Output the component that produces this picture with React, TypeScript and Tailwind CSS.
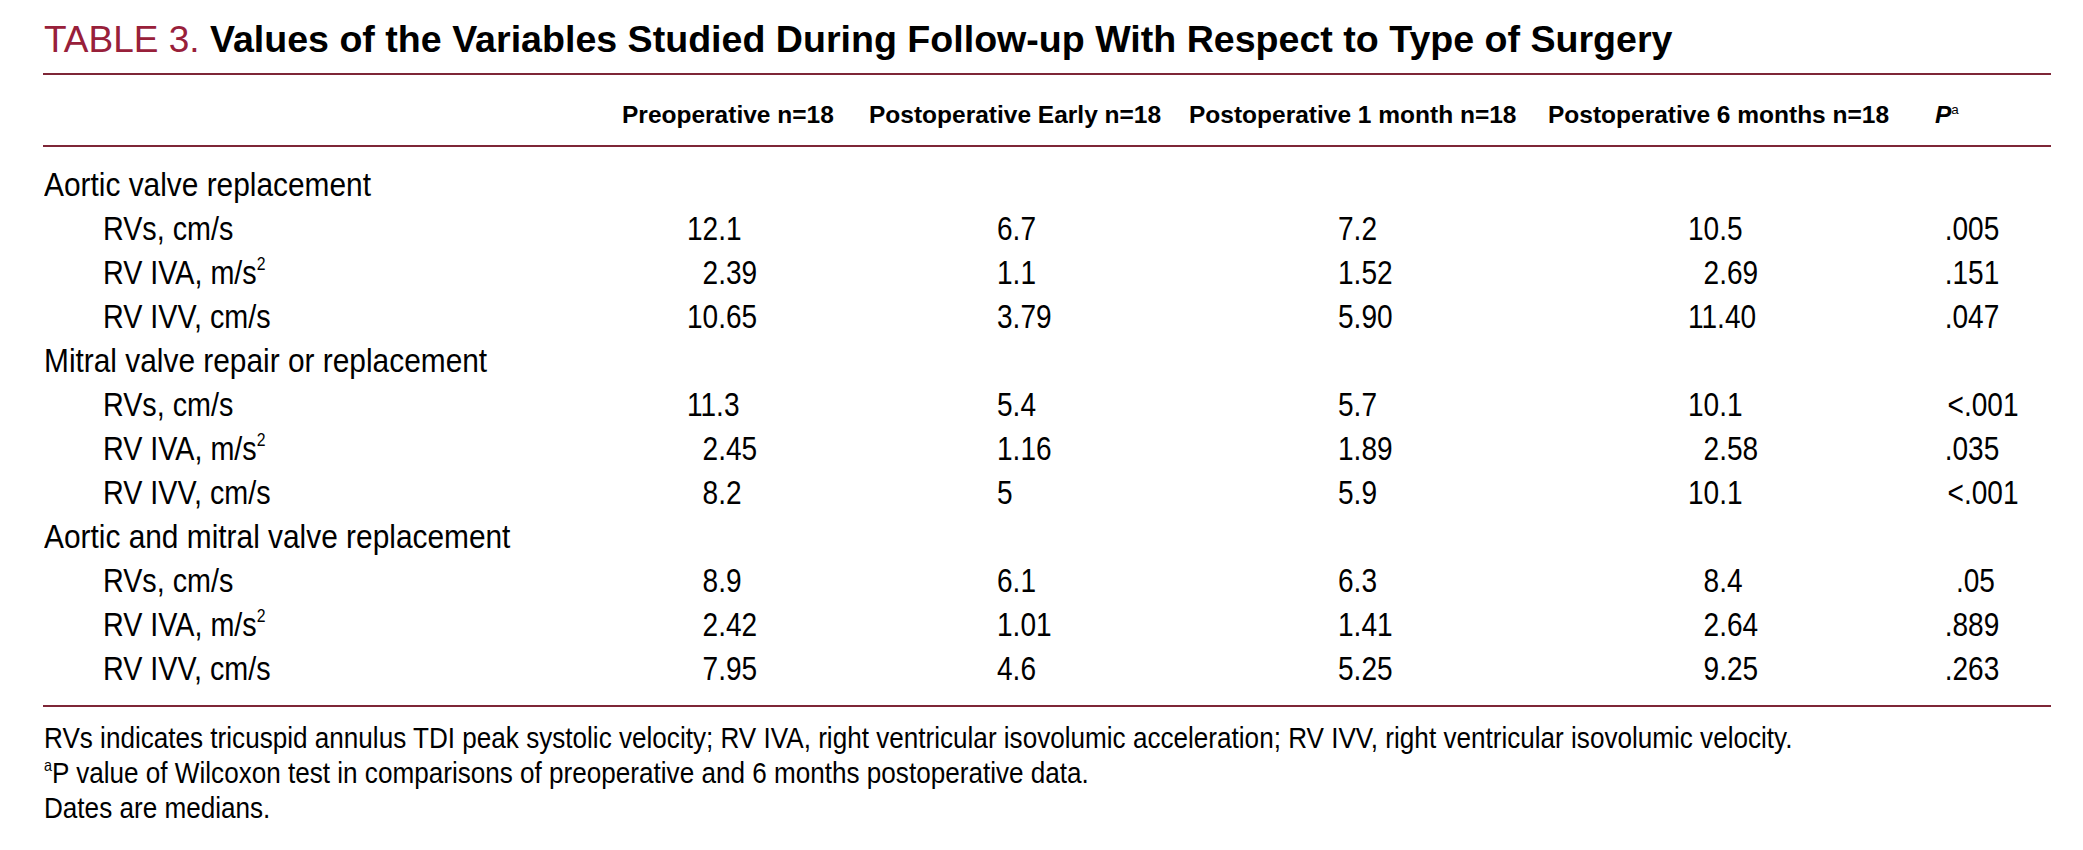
import type { ReactNode } from 'react';

/**
 * Table 3 — follow-up values by type of surgery
 */

type Row = {
  label: ReactNode;
  values: string[];
};

type Group = {
  label: string;
  rows: Row[];
};

const ivaLabel = (
  <>
    RV IVA, m/s<sup className="text-[55%] -top-[0.75em]">2</sup>
  </>
);

const groups: Group[] = [
  {
    label: 'Aortic valve replacement',
    rows: [
      { label: 'RVs, cm/s', values: ['12.1', '6.7', '7.2', '10.5', '.005'] },
      { label: ivaLabel, values: ['2.39', '1.1', '1.52', '2.69', '.151'] },
      { label: 'RV IVV, cm/s', values: ['10.65', '3.79', '5.90', '11.40', '.047'] },
    ],
  },
  {
    label: 'Mitral valve repair or replacement',
    rows: [
      { label: 'RVs, cm/s', values: ['11.3', '5.4', '5.7', '10.1', '<.001'] },
      { label: ivaLabel, values: ['2.45', '1.16', '1.89', '2.58', '.035'] },
      { label: 'RV IVV, cm/s', values: ['8.2', '5', '5.9', '10.1', '<.001'] },
    ],
  },
  {
    label: 'Aortic and mitral valve replacement',
    rows: [
      { label: 'RVs, cm/s', values: ['8.9', '6.1', '6.3', '8.4', '.05'] },
      { label: ivaLabel, values: ['2.42', '1.01', '1.41', '2.64', '.889'] },
      { label: 'RV IVV, cm/s', values: ['7.95', '4.6', '5.25', '9.25', '.263'] },
    ],
  },
];

const headers = [
  'Preoperative n=18',
  'Postoperative Early n=18',
  'Postoperative 1 month n=18',
  'Postoperative 6 months n=18',
];

// left offset of the numbers inside each column (cols 1-4)
const valueOffsets = ['pl-[65px]', 'pl-[128px]', 'pl-[149px]', 'pl-[140px]'];

const GRID = 'grid grid-cols-[579px_247px_320px_359px_387px_1fr]';
const RULE = 'h-[2px] bg-[#7e2637]';

/**
 * The print face is a condensed grotesque; squeeze Liberation Sans to match.
 */
const Cond = ({ children, className }: { children: ReactNode; className: string }) => (
  <span className={`inline-block ${className}`}>{children}</span>
);

/**
 * Number cell; columns 1 and 4 line up on the decimal point,
 * so one-digit values get an invisible leading digit.
 */
const NumCell = ({ value, col }: { value: string; col: number }) => {
  if (col === 4) {
    return (
      <div className="pr-[56px] text-right">
        <Cond className="origin-right scale-x-[0.85]">{value}</Cond>
      </div>
    );
  }
  const needsPad = (col === 0 || col === 3) && value.split('.')[0].length < 2;
  return (
    <div className={valueOffsets[col]}>
      <Cond className="origin-left scale-x-[0.85]">
        {needsPad && <span className="invisible">0</span>}
        {value}
      </Cond>
    </div>
  );
};

export default function App() {
  return (
    <div className="min-h-[850px] w-[2083px] bg-white text-black font-['Liberation_Sans',sans-serif]">
      <div className="ml-[43px] w-[2008px]">
        {/* Title */}
        <h1 className="pt-[17px] pl-px text-[37px] leading-[44px] whitespace-nowrap">
          <span className="text-[#98203a]">TABLE 3. </span>
          <span className="font-bold text-[37.6px]">
            Values of the Variables Studied During Follow-up With Respect to Type of Surgery
          </span>
        </h1>

        <div className={`mt-[11px] ${RULE}`} />

        {/* Column headers */}
        <div className={`${GRID} pt-[26px] pb-[17px] text-[24.5px] leading-[27px] font-bold whitespace-nowrap`}>
          <div />
          {headers.map((h) => (
            <div key={h}>{h}</div>
          ))}
          <div className="italic">
            P<sup className="text-[55%] not-italic font-normal -top-[0.7em]">a</sup>
          </div>
        </div>

        <div className={RULE} />

        {/* Body */}
        <div className="pt-[16px] pb-[14px] text-[33px] leading-[44px] whitespace-nowrap">
          {groups.map((group) => (
            <div key={group.label}>
              <div className="pl-px">
                <Cond className="origin-left scale-x-[0.905]">{group.label}</Cond>
              </div>
              {group.rows.map((row, i) => (
                <div key={i} className={GRID}>
                  <div className="pl-[60px]">
                    <Cond className="origin-left scale-x-[0.87]">{row.label}</Cond>
                  </div>
                  {row.values.map((v, col) => (
                    <NumCell key={col} value={v} col={col} />
                  ))}
                </div>
              ))}
            </div>
          ))}
        </div>

        <div className={RULE} />

        {/* Footnotes */}
        <div className="mt-[13px] pl-px text-[30px] leading-[35px] whitespace-nowrap">
          <p>
            <Cond className="origin-left scale-x-[0.87]">
              RVs indicates tricuspid annulus TDI peak systolic velocity; RV IVA, right ventricular
              isovolumic acceleration; RV IVV, right ventricular isovolumic velocity.
            </Cond>
          </p>
          <p>
            <Cond className="origin-left scale-x-[0.87]">
              <sup className="text-[55%] -top-[0.7em]">a</sup>P value of Wilcoxon test in comparisons
              of preoperative and 6 months postoperative data.
            </Cond>
          </p>
          <p>
            <Cond className="origin-left scale-x-[0.87]">Dates are medians.</Cond>
          </p>
        </div>
      </div>
    </div>
  );
}
